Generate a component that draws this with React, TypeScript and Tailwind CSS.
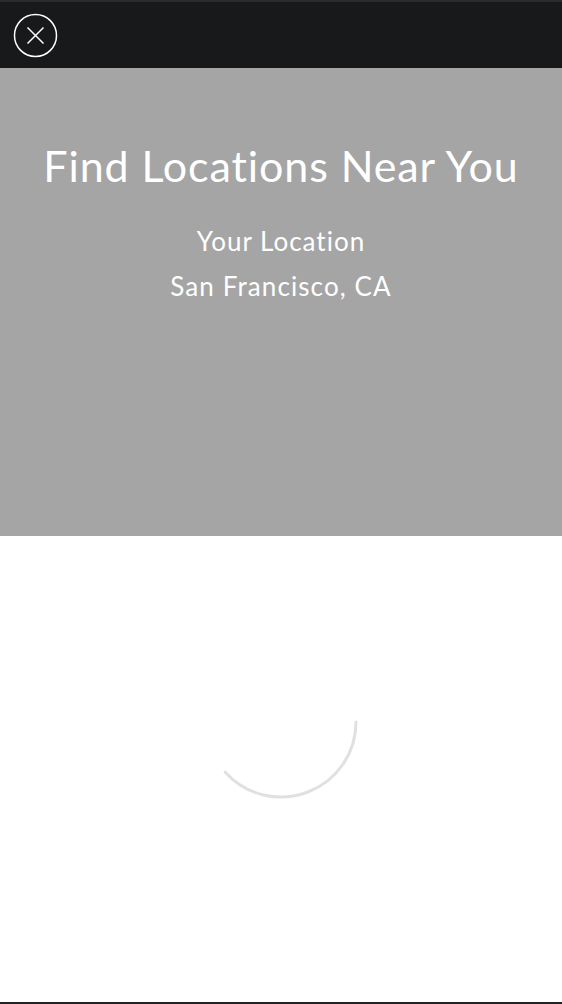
import React from "react";

export default function App() {
  const r = 75;
  const a = (138 * Math.PI) / 180;
  const ex = 77 + r * Math.cos(a);
  const ey = 77 + r * Math.sin(a);
  return (
    <div
      className="w-[562px] h-[1004px] flex flex-col bg-white overflow-hidden"
      style={{ fontFamily: "Lato, 'Open Sans', sans-serif" }}
    >
      <div className="h-[68px] bg-[#18191b] border-t-2 border-[#2b2b2d] flex items-center pl-[13px] shrink-0">
        <svg width="45" height="45" viewBox="0 0 45 45" fill="none">
          <circle cx="22.5" cy="22.5" r="21" stroke="white" strokeWidth="1.5" />
          <path d="M14.5 14.5 L30.5 30.5 M30.5 14.5 L14.5 30.5" stroke="white" strokeWidth="1.5" />
        </svg>
      </div>
      <div className="h-[468px] bg-[#a5a5a5] flex flex-col items-center text-white shrink-0 pt-[72px]">
        <h1 className="text-[43px] leading-[52px] tracking-[0.9px]">Find Locations Near You</h1>
        <p className="mt-[33px] text-[26px] leading-[32px] tracking-[1px]">Your Location</p>
        <p className="mt-[13px] text-[26px] leading-[32px] tracking-[1.1px]">San Francisco, CA</p>
      </div>
      <div className="flex-1 flex justify-center pt-[109px]">
        <svg width="154" height="154" viewBox="0 0 154 154" fill="none">
          <path
            d={`M ${77 + r} 77 A ${r} ${r} 0 0 1 ${ex} ${ey}`}
            stroke="#e0e0e0"
            strokeWidth="3"
            strokeLinecap="round"
          />
        </svg>
      </div>
      <div className="h-[2px] bg-[#222] shrink-0" />
    </div>
  );
}
